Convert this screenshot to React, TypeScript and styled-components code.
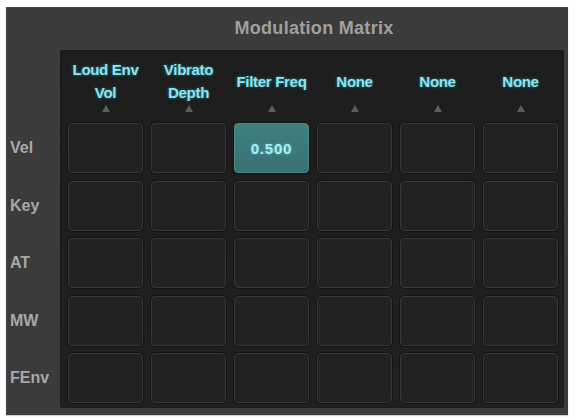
import React from "react";
import styled, { createGlobalStyle } from "styled-components";

const GlobalStyle = createGlobalStyle`
  html, body {
    margin: 0;
    padding: 0;
    background: #ffffff;
  }
  body {
    font-family: "Liberation Sans", Arial, sans-serif;
  }
`;

// components START =======================================
const Page = styled.div`
  width: 578px;
  height: 420px;
  padding: 7px 10px 5px 6px;
  box-sizing: border-box;
`;

const Panel = styled.div`
  height: 408px;
  background: #3b3b3b;
  box-shadow: inset 1px 1px 0 #444, 0 1px 1px rgba(0, 0, 0, 0.2);
  display: grid;
  grid-template-columns: 54px 1fr;
  grid-template-rows: 43px 1fr;
  padding: 0 4px 7px 0;
  box-sizing: border-box;
`;

const Title = styled.div`
  grid-column: 1 / 3;
  display: flex;
  align-items: center;
  justify-content: center;
  padding-left: 58px;
  font-size: 18px;
  font-weight: bold;
  color: #a0a0a0;
  letter-spacing: 0.3px;
`;

const Labels = styled.div`
  display: flex;
  flex-direction: column;
  gap: 7.5px;
  padding-top: 73px;
  padding-left: 4px;
`;

const RowLabel = styled.div`
  height: 50px;
  display: flex;
  align-items: center;
  font-size: 16px;
  font-weight: bold;
  color: #a8a8a8;
`;

const Matrix = styled.div`
  background: linear-gradient(#1d1d1d, #202020);
  border-radius: 3px;
  padding: 8px 6px 5px 8px;
  box-shadow: inset 0 0 2px #141414;
`;

const Grid = styled.div`
  display: grid;
  grid-template-columns: repeat(6, 75px);
  grid-template-rows: 57.5px repeat(5, 50px);
  column-gap: 8px;
  row-gap: 7.5px;
`;

const Header = styled.div`
  display: flex;
  flex-direction: column;
  align-items: center;
`;

const HeaderText = styled.div`
  height: 46px;
  display: flex;
  align-items: center;
  justify-content: center;
  text-align: center;
  font-size: 15px;
  font-weight: bold;
  line-height: 23px;
  color: #8fe4ee;
  text-shadow: 0 0 3px rgba(40, 190, 215, 0.7);
  white-space: nowrap;
  letter-spacing: -0.3px;
`;

const Arrow = styled.div`
  width: 0;
  height: 0;
  margin-top: 1px;
  border-left: 4px solid transparent;
  border-right: 4px solid transparent;
  border-bottom: 7px solid #5c5c5c;
`;

const Cell = styled.div<{ $active?: boolean }>`
  box-sizing: border-box;
  border-radius: 4px;
  border: 1.5px solid ${(p) => (p.$active ? "#4d8a8a" : "#373737")};
  background: ${(p) => (p.$active ? "linear-gradient(#3f7f80, #377272)" : "#222222")};
  box-shadow: 0 0 0 1px #151515;
  display: flex;
  align-items: center;
  justify-content: center;
  font-size: 15px;
  font-weight: bold;
  letter-spacing: 0.8px;
  color: #a6f0f6;
  text-shadow: 0 0 3px rgba(120, 230, 245, 0.6);
`;
// components END =========================================

const headers = [["Loud Env", "Vol"], ["Vibrato", "Depth"], ["Filter Freq"], ["None"], ["None"], ["None"]];
const sources = ["Vel", "Key", "AT", "MW", "FEnv"];
const values: Record<string, string> = { "0-2": "0.500" };

export default function App() {
  return (
    <Page>
      <GlobalStyle />
      <Panel>
        <Title>Modulation Matrix</Title>
        <Labels>
          {sources.map((s) => (
            <RowLabel key={s}>{s}</RowLabel>
          ))}
        </Labels>
        <Matrix>
          <Grid>
            {headers.map((h, i) => (
              <Header key={"h" + i}>
                <HeaderText>
                  <div>
                    {h.map((line) => (
                      <div key={line}>{line}</div>
                    ))}
                  </div>
                </HeaderText>
                <Arrow />
              </Header>
            ))}
            {sources.map((s, r) =>
              headers.map((_, c) => {
                const v = values[`${r}-${c}`];
                return (
                  <Cell key={`${r}-${c}`} $active={!!v}>
                    {v}
                  </Cell>
                );
              })
            )}
          </Grid>
        </Matrix>
      </Panel>
    </Page>
  );
}
